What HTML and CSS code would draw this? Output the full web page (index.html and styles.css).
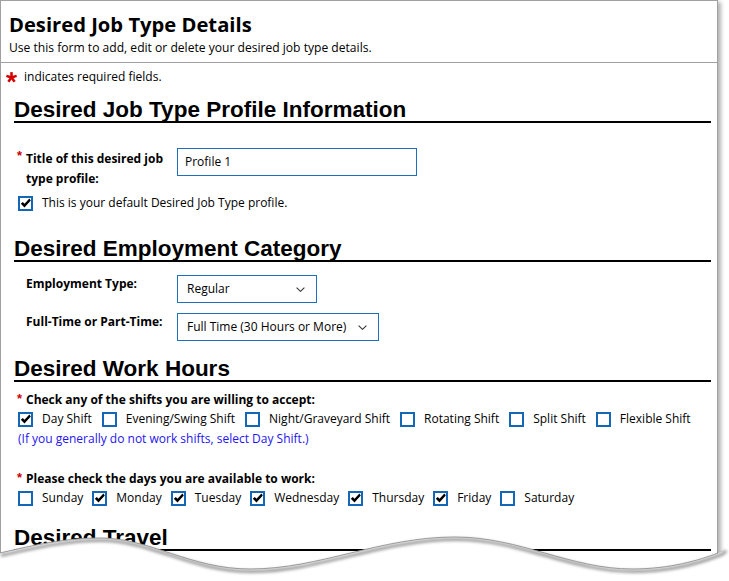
FILE: index.html
```html
<!DOCTYPE html>
<html lang="en">
<head>
<meta charset="utf-8">
<title>Desired Job Type Details</title>
<link rel="stylesheet" href="styles.css">
</head>
<body>
<div class="screen">
  <div class="page">
    <header class="hdr">
      <h1 class="title">Desired Job Type Details</h1>
      <p class="subtitle">Use this form to add, edit or delete your desired job type details.</p>
    </header>

    <div class="req-note">
      <svg class="bigstar" viewBox="-5 -5 10 10" aria-hidden="true">
        <g stroke="#d40000" stroke-width="2.3" stroke-linecap="butt">
          <line x1="0" y1="0" x2="0" y2="-4.9"/>
          <line x1="0" y1="0" x2="4.66" y2="-1.51"/>
          <line x1="0" y1="0" x2="2.88" y2="3.96"/>
          <line x1="0" y1="0" x2="-2.88" y2="3.96"/>
          <line x1="0" y1="0" x2="-4.66" y2="-1.51"/>
        </g>
      </svg>
      <span>indicates required fields.</span>
    </div>

    <div class="content">
      <h2 class="sec sec1">Desired Job Type Profile Information</h2>
      <div class="row row-title">
        <div class="lbl"><span class="star">*</span><span class="lbl-text">Title of this desired job type profile:</span></div>
        <div class="input">Profile 1</div>
      </div>
      <div class="checks default-check">
        <span class="opt"><span class="cb"><svg viewBox="0 0 11 11"><path d="M0.8 5.8 L2.8 3.9 L4.5 5.7 L9.4 0.6 L10.8 2.4 L4.5 9.6 Z"/></svg></span><span>This is your default Desired Job Type profile.</span></span>
      </div>

      <h2 class="sec sec2">Desired Employment Category</h2>
      <div class="row row-emp">
        <div class="lbl lbl-plain"><span class="lbl-text">Employment Type:</span></div>
        <div class="select sel-emp"><span>Regular</span><svg class="chev" viewBox="0 0 9 5"><path d="M0.6 0.6 L4.5 4.3 L8.4 0.6"/></svg></div>
      </div>
      <div class="row row-ft">
        <div class="lbl lbl-plain"><span class="lbl-text">Full-Time or Part-Time:</span></div>
        <div class="select sel-ft"><span>Full Time (30 Hours or More)</span><svg class="chev" viewBox="0 0 9 5"><path d="M0.6 0.6 L4.5 4.3 L8.4 0.6"/></svg></div>
      </div>

      <h2 class="sec sec3">Desired Work Hours</h2>
      <div class="q q1"><span class="star">*</span><span>Check any of the shifts you are willing to accept:</span></div>
      <div class="checks shifts">
        <span class="opt"><span class="cb"><svg viewBox="0 0 11 11"><path d="M0.8 5.8 L2.8 3.9 L4.5 5.7 L9.4 0.6 L10.8 2.4 L4.5 9.6 Z"/></svg></span><span>Day Shift</span></span>
        <span class="opt"><span class="cb"></span><span>Evening/Swing Shift</span></span>
        <span class="opt"><span class="cb"></span><span>Night/Graveyard Shift</span></span>
        <span class="opt"><span class="cb"></span><span>Rotating Shift</span></span>
        <span class="opt"><span class="cb"></span><span>Split Shift</span></span>
        <span class="opt"><span class="cb"></span><span>Flexible Shift</span></span>
      </div>
      <p class="hint">(If you generally do not work shifts, select Day Shift.)</p>

      <div class="q q2"><span class="star">*</span><span>Please check the days you are available to work:</span></div>
      <div class="checks days">
        <span class="opt"><span class="cb"></span><span>Sunday</span></span>
        <span class="opt"><span class="cb"><svg viewBox="0 0 11 11"><path d="M0.8 5.8 L2.8 3.9 L4.5 5.7 L9.4 0.6 L10.8 2.4 L4.5 9.6 Z"/></svg></span><span>Monday</span></span>
        <span class="opt"><span class="cb"><svg viewBox="0 0 11 11"><path d="M0.8 5.8 L2.8 3.9 L4.5 5.7 L9.4 0.6 L10.8 2.4 L4.5 9.6 Z"/></svg></span><span>Tuesday</span></span>
        <span class="opt"><span class="cb"><svg viewBox="0 0 11 11"><path d="M0.8 5.8 L2.8 3.9 L4.5 5.7 L9.4 0.6 L10.8 2.4 L4.5 9.6 Z"/></svg></span><span>Wednesday</span></span>
        <span class="opt"><span class="cb"><svg viewBox="0 0 11 11"><path d="M0.8 5.8 L2.8 3.9 L4.5 5.7 L9.4 0.6 L10.8 2.4 L4.5 9.6 Z"/></svg></span><span>Thursday</span></span>
        <span class="opt"><span class="cb"><svg viewBox="0 0 11 11"><path d="M0.8 5.8 L2.8 3.9 L4.5 5.7 L9.4 0.6 L10.8 2.4 L4.5 9.6 Z"/></svg></span><span>Friday</span></span>
        <span class="opt"><span class="cb"></span><span>Saturday</span></span>
      </div>

      <h2 class="sec sec4">Desired Travel</h2>
    </div>
  </div>

  <svg class="tear" viewBox="0 0 729 61" aria-hidden="true">
    <defs>
      <filter id="soft" x="-5%" y="-100%" width="110%" height="300%">
        <feGaussianBlur stdDeviation="1.6"/>
      </filter>
    </defs>
    <path d="M0,33 C35,25 65,18 100,18 C150,18 190,49 250,49 C320,49 380,17 455,17 C520,17 570,49 632,49 C670,49 700,40 718,33 L729,30 L729,61 L0,61 Z" fill="#fff"/>
    <path d="M0,33 C35,25 65,18 100,18 C150,18 190,49 250,49 C320,49 380,17 455,17 C520,17 570,49 632,49 C670,49 700,40 718,33 C721,32 724,30 725,28" fill="none" stroke="#000" stroke-opacity="0.4" stroke-width="3" filter="url(#soft)" transform="translate(1,2.5)"/>
    <path d="M0,33 C35,25 65,18 100,18 C150,18 190,49 250,49 C320,49 380,17 455,17 C520,17 570,49 632,49 C670,49 700,40 718,33" fill="none" stroke="#9a9a9a" stroke-width="1"/>
  </svg>
</div>
</body>
</html>
```

FILE: styles.css
```css
html, body {
  margin: 0;
  padding: 0;
  background: #fff;
}

body {
  font-family: "Open Sans", "Noto Sans", sans-serif;
  font-size: 12px;
  color: #000;
}

.screen {
  position: relative;
  width: 729px;
  height: 581px;
  overflow: hidden;
}

.page {
  width: 716px;
  height: 620px;
  border: 1px solid #a0a0a0;
  border-bottom: none;
  background: #fff;
  box-shadow: 3px 2px 4px rgba(0, 0, 0, 0.3);
}

/* header */
.hdr {
  padding: 11px 8px 6px;
  border-bottom: 1px solid #a0a0a0;
}

.title {
  margin: 0;
  font-size: 20.2px;
  line-height: 24px;
  font-weight: 700;
  color: #000;
}

.subtitle {
  margin: 4px 0 0;
  font-size: 12.1px;
  line-height: 16px;
}

.req-note {
  display: flex;
  align-items: center;
  margin: 6px 0 0 5px;
  line-height: 16px;
}

.bigstar {
  width: 11px;
  height: 11px;
  margin-right: 7px;
  flex: none;
}

/* content */
.content {
  margin-left: 13px;
  width: 697px;
}

.sec {
  margin: 0;
  font-family: "Liberation Sans", Arial, sans-serif;
  font-size: 22.5px;
  line-height: 23px;
  font-weight: 700;
  color: #000;
  border-bottom: 2px solid #000;
}

.sec1 { margin-top: 13px; }
.sec2 { margin-top: 26px; }
.sec3 { margin-top: 16px; }
.sec4 { margin-top: 20px; }

.row {
  display: flex;
  align-items: flex-start;
}

.row-title { margin-top: 25px; }
.row-emp { margin-top: 11px; }
.row-ft { margin-top: 8px; }

.lbl {
  display: flex;
  width: 163px;
  flex: none;
  padding: 1px 0 0 3px;
  box-sizing: border-box;
  font-weight: 700;
  line-height: 20px;
}

.lbl-plain {
  padding-left: 12px;
}

.lbl-text {
  width: 151px;
}

.star {
  width: 9px;
  flex: none;
  color: #cc0000;
  font-family: "Liberation Sans", Arial, sans-serif;
  font-size: 13px;
  font-weight: 700;
  line-height: 14px;
}

.input {
  width: 240px;
  height: 28px;
  box-sizing: border-box;
  border: 1px solid #1f6fbf;
  padding: 0 7px;
  display: flex;
  align-items: center;
  line-height: 16px;
}

.select {
  margin-top: 2px;
  height: 28px;
  box-sizing: border-box;
  border: 1px solid #1f6fbf;
  padding: 0 11px 0 9px;
  display: flex;
  align-items: center;
  justify-content: space-between;
  line-height: 16px;
}

.sel-emp { width: 140px; }
.sel-ft { width: 202px; }

.chev {
  width: 9px;
  height: 5px;
  flex: none;
}

.chev path {
  fill: none;
  stroke: #333;
  stroke-width: 1.1;
}

/* checkboxes */
.checks {
  display: flex;
  align-items: center;
  padding-left: 4px;
  line-height: 16px;
  white-space: nowrap;
}

.default-check { margin-top: 6px; }
.shifts { margin-top: 3px; }
.days { margin-top: 3px; }

.opt {
  display: inline-flex;
  align-items: center;
  margin-right: 10px;
}

.days .opt {
  margin-right: 9px;
}

.cb {
  width: 15px;
  height: 15px;
  box-sizing: border-box;
  border: 2px solid #1466b6;
  margin-right: 9px;
  flex: none;
  display: flex;
  align-items: center;
  justify-content: center;
  background: #fff;
}

.cb svg {
  width: 11px;
  height: 11px;
}

.cb svg path {
  fill: #000;
}

.q {
  display: flex;
  padding: 1px 0 0 3px;
  font-weight: 700;
  line-height: 16px;
}

.q1 { margin-top: 9px; }
.q2 { margin-top: 23px; }

.hint {
  margin: 4px 0 0;
  padding-left: 4px;
  color: #2414f2;
  line-height: 16px;
}

/* torn bottom edge */
.tear {
  position: absolute;
  left: 0;
  top: 520px;
  width: 729px;
  height: 61px;
}
```
